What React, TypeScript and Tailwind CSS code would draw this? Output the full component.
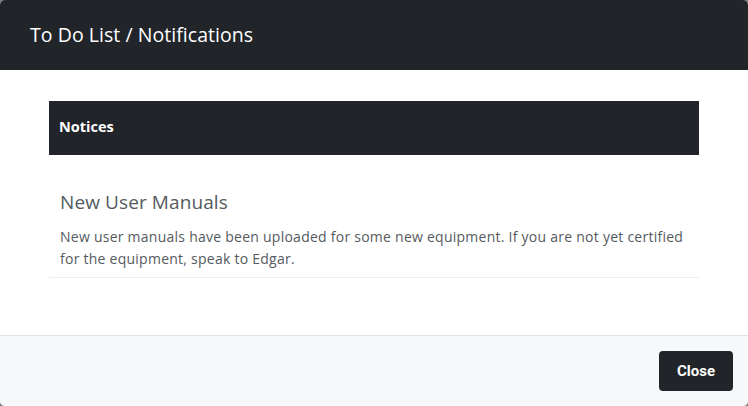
export default function App() {
  return (
    <div className="w-[748px] h-[406px] bg-[#7a7a7a]" style={{ fontFamily: '"Open Sans", sans-serif' }}>
      <div className="w-full h-full rounded-[5px] overflow-hidden flex flex-col bg-white">
        <div className="h-[70px] bg-[#212529] flex items-center px-[30px] pb-[1px]">
          <h1 className="text-[19.5px] text-white tracking-[0.05px]">To Do List / Notifications</h1>
        </div>
        <div className="flex-1 px-[49px] pt-[31px]">
          <div className="h-[54px] bg-[#212529] flex items-center px-[10px] pb-[3px]">
            <span className="text-[14.5px] font-bold text-white">Notices</span>
          </div>
          <div className="border-b border-[#eeeeee] pl-[11px] pt-[31px] pb-[7px]">
            <h2 className="text-[19px] text-[#555a60] leading-[32px] tracking-[0.1px]">New User Manuals</h2>
            <p className="text-[14px] text-[#555a60] leading-[22px] mt-[8px] tracking-[0.25px]">
              New user manuals have been uploaded for some new equipment. If you are not yet certified for the equipment, speak to Edgar.
            </p>
          </div>
        </div>
        <div className="h-[71px] bg-[#f7f8fa] border-t border-[#dee2e6] flex items-center justify-end px-[15px]">
          <button className="h-[40px] px-[18px] rounded-[4px] bg-[#212529] text-white text-[15px] font-bold" style={{ fontFamily: 'Roboto, sans-serif' }}>
            Close
          </button>
        </div>
      </div>
    </div>
  );
}
